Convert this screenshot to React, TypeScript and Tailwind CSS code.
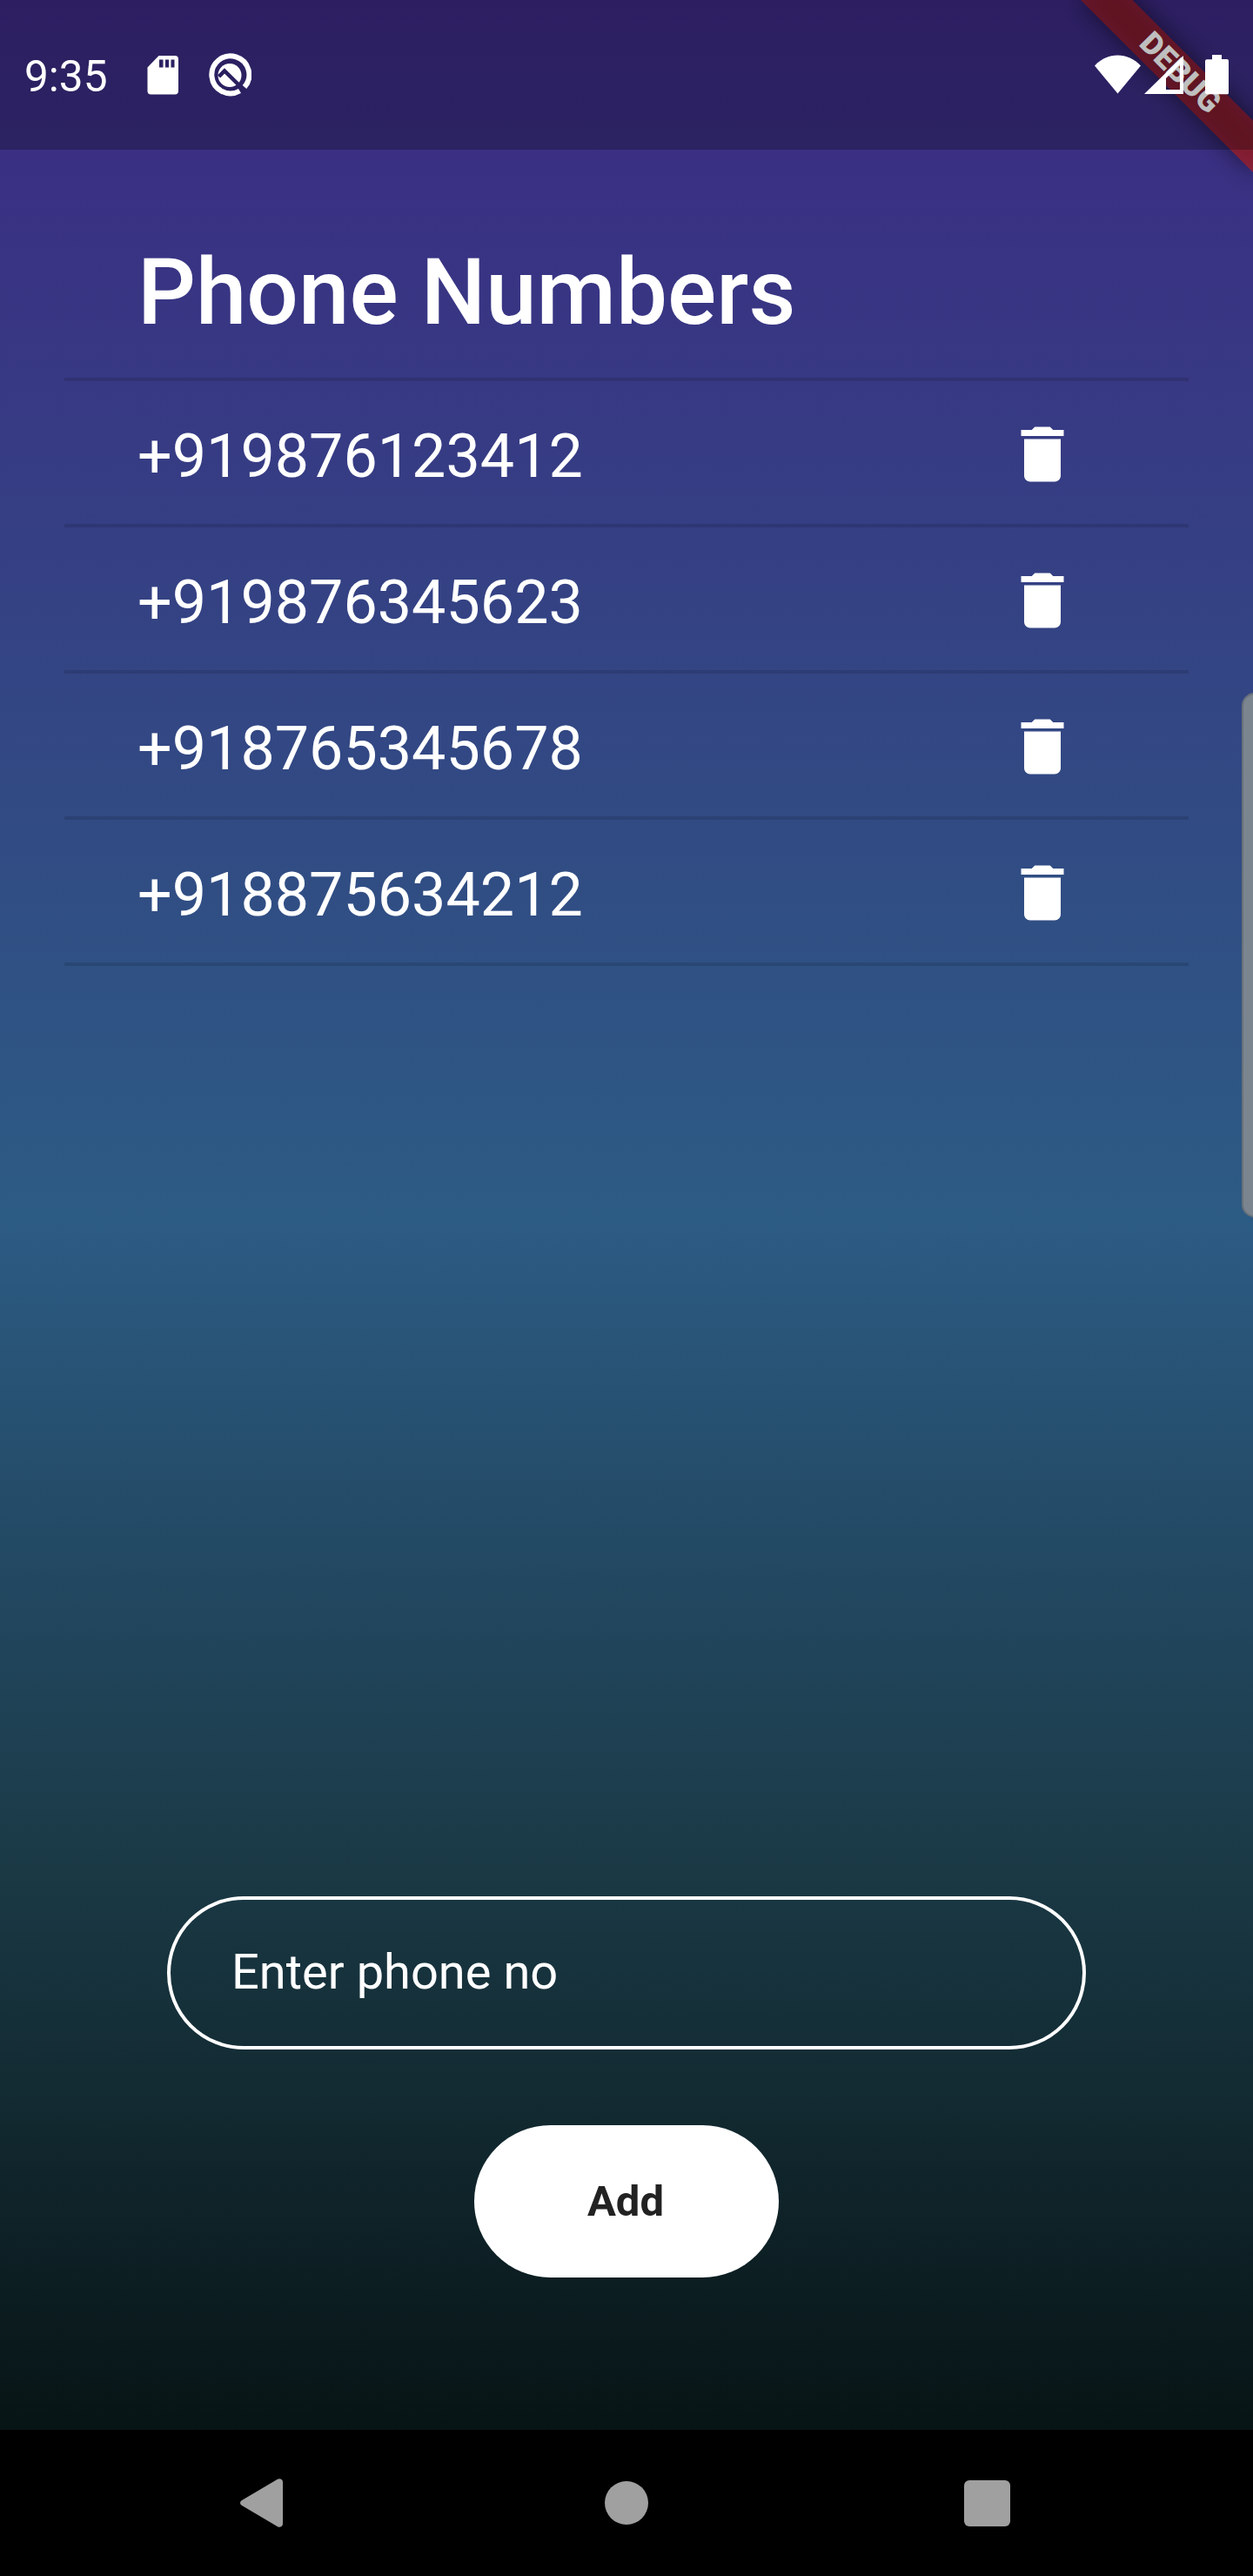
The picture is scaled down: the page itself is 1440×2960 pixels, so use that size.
const numbers = ["+919876123412", "+919876345623", "+918765345678", "+918875634212"];

function TrashIcon() {
  return (
    <svg viewBox="0 0 24 24" className="block size-[84px] fill-white">
      <path d="M6 19c0 1.1.9 2 2 2h8c1.1 0 2-.9 2-2V7H6v12zM19 4h-3.5l-1-1h-5l-1 1H5v2h14V4z" />
    </svg>
  );
}

function DebugBanner() {
  return (
    <div className="absolute inset-0 overflow-hidden">
      <div className="absolute left-[1300px] top-[98px] h-[42px] w-[280px] origin-[140px_-98px] rotate-45">
        <div className="absolute inset-0 bg-black/50 blur-[14px]" />
        <div className="absolute inset-0 flex items-center justify-center bg-[#b71c1c]/63 text-[35.7px] leading-none font-black text-white">
          DEBUG
        </div>
      </div>
    </div>
  );
}

function StatusBar() {
  return (
    <div className="relative flex h-[172px] w-full items-center bg-black/25">
      <div className="mt-[4px] ml-[28px] text-[49.5px] leading-[58px] text-white">9:35</div>
      <svg viewBox="0 0 36 45" className="absolute left-[169px] top-[64px] h-[45px] w-[36px] fill-white">
        <path
          fillRule="evenodd"
          d="M13.5 0H32a4 4 0 0 1 4 4v36.500a4 4 0 0 1-4 4H4.500a4 4 0 0 1-4-4V13.500zM14 4.500v9h4.500v-9zM21 4.500v9h4v-9zM27.500 4.500v9h4v-9z"
        />
      </svg>
      <svg viewBox="0 0 50 50" className="absolute left-[239px] top-[61px] size-[50px]">
        <path d="M36.500 43.500A21.500 21.500 0 1 1 42 39" fill="none" stroke="white" strokeWidth="6" />
        <circle cx="25" cy="25.500" r="13.500" fill="white" />
        <path d="M12.500 27L19 20.500L43.500 44.500" fill="none" stroke="#2b205f" strokeWidth="4.500" />
      </svg>
      <svg viewBox="0 0 160 50" className="absolute left-[1256px] top-[61px] h-[50px] w-[160px] fill-white">
        <path d="M2 14.500C17-1.500 40-1.500 55 14.500L28.500 46.500z" />
        <path fillRule="evenodd" d="M59 47L104 3V47zM84 42H100V13L84 29z" />
        <path d="M137 2h11v5h6a2 2 0 0 1 2 2v36a2 2 0 0 1-2 2.300h-23a2 2 0 0 1-2-2v-36a2 2 0 0 1 2-2h6z" />
      </svg>
    </div>
  );
}

export default function App() {
  return (
    <div className="flex h-[2960px] w-[1440px] flex-col overflow-hidden bg-black font-[Roboto,sans-serif]">
      <main className="relative flex h-[2792px] flex-col items-center bg-[linear-gradient(#3c2983_0%,#2c5b84_50%,#1a3945_77%,#071415_100%)]">
        <DebugBanner />
        <StatusBar />
        <section className="mt-[103px] w-[1292px] text-white">
          <h1 className="ml-[84px] h-[159px] text-[105px] leading-[124px] font-medium">Phone Numbers</h1>
          <div className="h-[4px] bg-black/12" />
          {numbers.map((n) => (
            <div key={n}>
              <div className="flex h-[164px] justify-between pr-[126px] pl-[84px]">
                <span className="mt-[45px] text-[70px] leading-[82px]">{n}</span>
                <button className="mt-[42px] size-[84px]">
                  <TrashIcon />
                </button>
              </div>
              <div className="h-[4px] bg-black/12" />
            </div>
          ))}
        </section>
        <div className="mt-auto flex h-[176px] w-[1056px] items-center rounded-full border-4 border-white pb-[2px] pl-[70px] text-[56px] text-white">
          Enter phone no
        </div>
        <button className="mt-[87px] mb-[175px] h-[175px] w-[350px] rounded-full bg-white pt-px pr-[2px] text-[49px] font-bold text-[#222]">
          Add
        </button>
        <div className="absolute top-[796px] -right-[4px] h-[603px] w-[17px] rounded-l-[15px] border-2 border-black/15 bg-[#7b8590]" />
      </main>
      <nav className="flex h-[168px] items-center justify-between pr-[279px] pl-[276px]">
        <svg viewBox="0 0 49 56" className="h-[56px] w-[49px] fill-[#a0a0a0]">
          <path d="M43 .8Q45.500-.5 47.500 1Q49 2 49 4V52Q49 54 47.500 55Q45.500 56.500 43 55.200L2 31Q0 30 0 28Q0 26 2 25z" />
        </svg>
        <div className="ml-[7px] size-[50px] rounded-full bg-[#a0a0a0]" />
        <div className="size-[53px] rounded-[6px] bg-[#a0a0a0]" />
      </nav>
    </div>
  );
}
